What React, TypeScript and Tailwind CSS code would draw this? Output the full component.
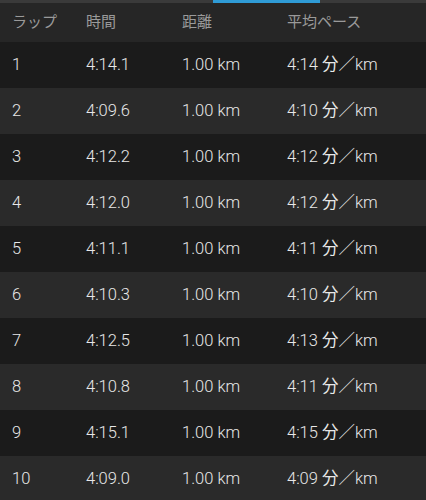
const laps = [
    { lap: "1", time: "4:14.1", pace: "4:14" },
    { lap: "2", time: "4:09.6", pace: "4:10" },
    { lap: "3", time: "4:12.2", pace: "4:12" },
    { lap: "4", time: "4:12.0", pace: "4:12" },
    { lap: "5", time: "4:11.1", pace: "4:11" },
    { lap: "6", time: "4:10.3", pace: "4:10" },
    { lap: "7", time: "4:12.5", pace: "4:13" },
    { lap: "8", time: "4:10.8", pace: "4:11" },
    { lap: "9", time: "4:15.1", pace: "4:15" },
    { lap: "10", time: "4:09.0", pace: "4:09" },
];

const font = "font-['Roboto','Noto_Sans_CJK_JP',sans-serif]";

const App = () => {
    return (
        <div className={`w-[426px] h-[500px] overflow-hidden bg-[#1b1b1b] ${font}`}>
            {/* tab indicator */}
            <div className="h-[3px] bg-[#3a3a3a] flex">
                <div className="ml-[213px] w-[107px] bg-[#2f9bd6]" />
            </div>

            <div className="h-[39px] bg-[#262626] flex items-center text-[15px] text-[#9a9a9a]">
                <div className="w-[86px] pl-3">ラップ</div>
                <div className="w-[96px]">時間</div>
                <div className="w-[105px]">距離</div>
                <div>平均ペース</div>
            </div>

            {laps.map((l, i) => (
                <div
                    key={l.lap}
                    className={`h-[46px] flex items-center text-[16.5px] font-light text-[#e8e8e8] ${
                        i % 2 === 0 ? "bg-[#1b1b1b]" : "bg-[#2a2a2a]"
                    }`}
                >
                    <div className="w-[86px] pl-3">{l.lap}</div>
                    <div className="w-[96px]">{l.time}</div>
                    <div className="w-[105px]">1.00 km</div>
                    <div>
                        {l.pace} <span className="font-normal">分</span>／km
                    </div>
                </div>
            ))}
        </div>
    );
};

export default App;
